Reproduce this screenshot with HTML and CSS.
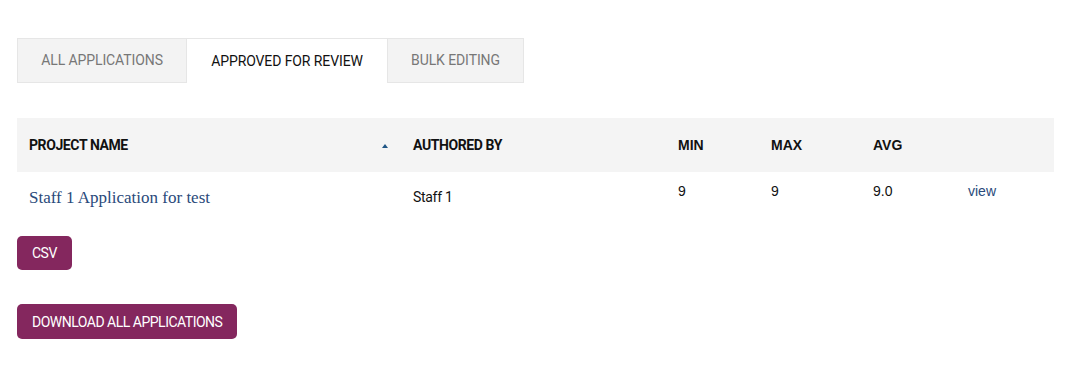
FILE: index.html
```html
<!DOCTYPE html>
<html lang="en">
<head>
<meta charset="utf-8">
<title>Applications</title>
<link rel="stylesheet" href="styles.css">
</head>
<body>
<div class="page">
  <nav class="tabs">
    <a class="tab tab-all">ALL APPLICATIONS</a>
    <a class="tab tab-approved active">APPROVED FOR REVIEW</a>
    <a class="tab tab-bulk">BULK EDITING</a>
  </nav>

  <table class="grid">
    <colgroup>
      <col class="w-name">
      <col class="w-author">
      <col class="w-min">
      <col class="w-max">
      <col class="w-avg">
      <col class="w-act">
    </colgroup>
    <thead>
      <tr>
        <th class="h-cond c-name"><span>PROJECT NAME</span><span class="sort"></span></th>
        <th class="h-cond">AUTHORED BY</th>
        <th>MIN</th>
        <th>MAX</th>
        <th>AVG</th>
        <th></th>
      </tr>
    </thead>
    <tbody>
      <tr>
        <td><a class="proj">Staff 1 Application for test</a></td>
        <td class="author">Staff 1</td>
        <td class="num">9</td>
        <td class="num">9</td>
        <td class="num">9.0</td>
        <td class="num"><a class="view">view</a></td>
      </tr>
    </tbody>
  </table>

  <div class="actions">
    <a class="btn">CSV</a>
    <a class="btn btn-wide">DOWNLOAD ALL APPLICATIONS</a>
  </div>
</div>
</body>
</html>
```

FILE: styles.css
```css
html, body {
  margin: 0;
  padding: 0;
  background: #ffffff;
}

.page {
  padding: 38px 17px 0 17px;
  font-family: Roboto, "Liberation Sans", Arial, sans-serif;
}

.tabs {
  display: flex;
  height: 45px;
}

.tab {
  display: flex;
  align-items: center;
  justify-content: center;
  box-sizing: border-box;
  height: 45px;
  font-family: Roboto, "Liberation Sans", sans-serif;
  font-size: 14px;
  letter-spacing: -0.1px;
  color: #777777;
  background: #f3f3f3;
  border: 1px solid #e6e6e6;
  padding-bottom: 1px;
}

.tab-all { width: 170px; }
.tab-approved { width: 200px; border-left: none; border-right: none; border-bottom: none; }
.tab-bulk { width: 137px; }

.tab.active {
  background: #ffffff;
  color: #111111;
}

.grid {
  margin-top: 35px;
  width: 1037px;
  border-collapse: collapse;
  table-layout: fixed;
}

.w-name { width: 384px; }
.w-author { width: 265px; }
.w-min { width: 93px; }
.w-max { width: 102px; }
.w-avg { width: 95px; }
.w-act { width: 98px; }

.grid thead tr {
  height: 54px;
}

.grid th {
  background: #f4f4f4;
  padding: 0 0 0 12px;
  text-align: left;
  font-family: "Liberation Sans", Arial, sans-serif;
  font-weight: bold;
  font-size: 14px;
  color: #111111;
}

.grid th.h-cond {
  font-family: Roboto, "Liberation Sans", sans-serif;
  font-weight: bold;
  font-size: 14px;
  letter-spacing: -0.4px;
}

.grid th.c-name {
  position: relative;
}

.sort {
  position: absolute;
  right: 13px;
  top: 26px;
  width: 0;
  height: 0;
  border-left: 3px solid transparent;
  border-right: 3px solid transparent;
  border-bottom: 4px solid #1e5585;
}

.grid tbody tr {
  height: 52px;
}

.grid td {
  vertical-align: top;
  padding: 0 0 0 12px;
}

.proj {
  display: block;
  padding-top: 16px;
  font-family: "Liberation Serif", "Times New Roman", serif;
  font-size: 17px;
  line-height: 20px;
  color: #2a4a7b;
}

.grid td.author {
  padding-top: 17px;
  font-family: Roboto, "Liberation Sans", sans-serif;
  font-size: 14px;
  line-height: 16px;
  letter-spacing: -0.3px;
  color: #111111;
}

.grid td.num {
  padding-top: 11px;
  font-family: "Liberation Sans", Arial, sans-serif;
  font-size: 14px;
  line-height: 16px;
  color: #111111;
}

.view {
  color: #2a4a7b;
}

.actions {
  margin-top: 12px;
  display: flex;
  flex-direction: column;
  align-items: flex-start;
  gap: 34px;
}

.btn {
  display: flex;
  align-items: center;
  justify-content: center;
  box-sizing: border-box;
  height: 34px;
  padding: 0 15px;
  border-radius: 5px;
  background: #84275e;
  color: #ffffff;
  font-family: Roboto, "Liberation Sans", sans-serif;
  font-size: 14px;
  letter-spacing: -0.5px;
}

.btn-wide {
  height: 35px;
}
```
